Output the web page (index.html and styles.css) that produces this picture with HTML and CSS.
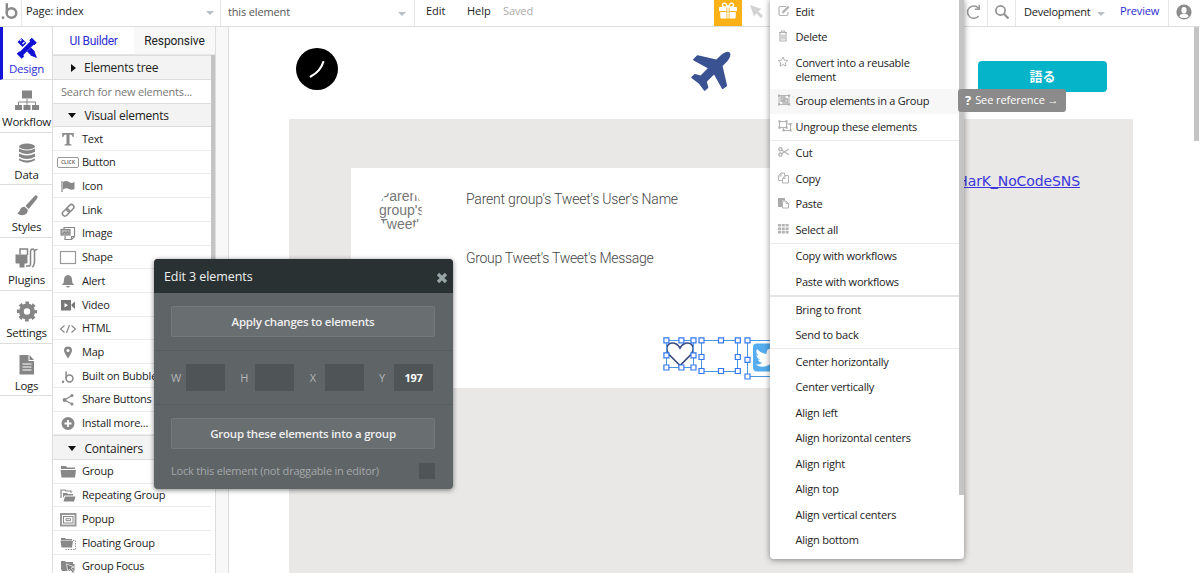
FILE: index.html
```html
<!DOCTYPE html>
<html lang="en">
<head>
<meta charset="utf-8">
<title>Editor</title>
<link rel="stylesheet" href="styles.css">
</head>
<body>
<div class="app">
  <header class="topbar">
    <div class="brand"><svg width="18" height="20" viewBox="0 0 18 20"><circle cx="11.500" cy="12" r="4.800" fill="none" stroke="#8a8a8a" stroke-width="2.400"/><path d="M6.800 2.200v9.800" stroke="#8a8a8a" stroke-width="2.400"/><circle cx="3" cy="16.700" r="1.400" fill="#8a8a8a"/></svg></div>
    <div class="picker page-picker"><span>Page: index</span><i class="caret"></i></div>
    <div class="picker element-picker"><span>this element</span><i class="caret"></i></div>
    <nav class="menus"><span class="m-edit">Edit</span><span class="m-help">Help</span><span class="m-saved">Saved</span></nav>
    <div class="gift"><svg width="20" height="18" viewBox="0 0 20 18" fill="#fff"><path d="M1 5h7.500v4H1zM11.500 5H19v4h-7.500zM2.300 10H8.500v6.500H3.500q-1.200 0-1.200-1.200zM11.500 10h6.200v5.300q0 1.200-1.200 1.200h-5zM9.300 5h1.400v11.500H9.300z"/><path d="M9.800 5C8.500 2 7 .9 5.800 1.200 4 1.700 4 4.600 6.300 5zM10.200 5C11.500 2 13 .9 14.200 1.200 16 1.700 16 4.600 13.700 5z" fill="none" stroke="#fff" stroke-width="1.400"/></svg></div>
    <div class="pointer"><svg width="14" height="14" viewBox="0 0 14 14"><path d="M0 0l11.500 4-3.300 2.200 4.800 4.800-2 2-4.800-4.800L4 11.500z" fill="#d2d2d2"/></svg></div>
    <div class="right-tools">
      <div class="redo"><svg width="16" height="16" viewBox="0 0 16 16"><path d="M12.300 3.900A6.200 6.200 0 1 0 12.600 12M13.200.8v4.400H8.800" fill="none" stroke="#999" stroke-width="1.500"/></svg></div>
      <div class="search-tool"><svg width="16" height="16" viewBox="0 0 16 16"><circle cx="6.500" cy="6.500" r="4.600" fill="none" stroke="#929292" stroke-width="1.700"/><path d="M9.800 9.800l4.700 4.700" stroke="#929292" stroke-width="2.200"/></svg></div>
      <div class="version"><span>Development</span><i class="caret"></i></div>
      <div class="preview">Preview</div>
      <div class="avatar"><svg width="16" height="16" viewBox="0 0 16 16"><circle cx="8" cy="8" r="7.600" fill="#8c8c8c"/><ellipse cx="8" cy="6.300" rx="2.600" ry="3.300" fill="#fff"/><path d="M3.200 12.500q.6-2 3.300-2.700h3q2.700.7 3.300 2.700-1.800 1.500-4.800 1.500t-4.800-1.500z" fill="#fff"/></svg></div>
    </div>
  </header>

  <div class="body">
    <aside class="rail">
      <div class="tab active"><svg width="24" height="24" viewBox="0 0 24 24"><path d="M4.500 4L18 17.500" stroke="#1010d4" stroke-width="5.500"/><path d="M17.500 5.500L6 17" stroke="#fff" stroke-width="6.500"/><path d="M18 6L6 18" stroke="#1010d4" stroke-width="4.600"/><path d="M3 16.500l5 5M15.500 3l5 5" stroke="#1010d4" stroke-width="3.600"/><path d="M19.500 15.500L22 22l-6.500-2.500z" fill="#1010d4"/><path d="M6.500 3.500l-1.500 1.500M9.500 6l-2 2" stroke="#fff" stroke-width="1.200"/></svg><span>Design</span></div>
      <div class="tab"><svg width="24" height="24" viewBox="0 0 24 24"><path d="M7 1.500h10v8H7zM0 16h7v5H0zM8.500 16h7v5h-7zM17 16h7v5h-7z" fill="#858585"/><path d="M12 10v6M3.500 16v-3h17v3" fill="none" stroke="#858585"/></svg><span>Workflow</span></div>
      <div class="tab"><svg width="24" height="24" viewBox="0 0 24 24" fill="#858585"><ellipse cx="12" cy="4.500" rx="8" ry="3"/><path d="M4 6.500q8 4 16 0v3.200q-8 4.500-16 0zM4 11.500q8 4 16 0v3.200q-8 4.500-16 0zM4 16.500q8 4 16 0v1.800q-8 4.800-16 0z"/></svg><span>Data</span></div>
      <div class="tab"><svg width="24" height="24" viewBox="0 0 24 24" fill="#858585"><path d="M21.500 1.500q2 .8.500 3.200l-8.300 10.300-3.300-3 9-9.800q1.100-1.200 2.100-.7zM9.500 12.700l3.400 3q-.3 5-5.400 5.500Q4.600 21.500 2 19q2 .2 2.900-2.700.8-3.400 4.600-3.600z"/></svg><span>Styles</span></div>
      <div class="tab"><svg width="24" height="24" viewBox="0 0 24 24"><path d="M.5 7.500h12v8q0 1-1 1H9.500v4h-5v-4h-3q-1 0-1-1z" fill="#858585"/><path d="M5 7.500V2h7.500v6M11 19h3q1.500 0 1.500-2V5q0-3 2-3t2 3v9q0 5-2.500 6M19.500 16V4.500q0-2 3-2" fill="none" stroke="#858585" stroke-width="1.500"/></svg><span>Plugins</span></div>
      <div class="tab"><svg width="24" height="24" viewBox="0 0 24 24"><circle cx="12" cy="11.500" r="5.600" fill="none" stroke="#858585" stroke-width="4.800"/><circle cx="12" cy="11.500" r="8.500" fill="none" stroke="#858585" stroke-width="3.200" stroke-dasharray="3.500 3.176" stroke-dashoffset="1.750"/></svg><span>Settings</span></div>
      <div class="tab"><svg width="24" height="24" viewBox="0 0 24 24"><path d="M4.500 2H13.500v6h5.500v13.500H4.500z" fill="#858585"/><path d="M14.500 2l4.500 5h-4.500z" fill="#858585"/><path d="M7.500 11h9M7.500 14h9M7.500 17h9" stroke="#fff"/></svg><span>Logs</span></div>
    </aside>

    <section class="palette">
      <div class="palette-tabs"><span class="on">UI Builder</span><span>Responsive</span></div>
      <div class="scroll">
        <div class="list">
          <div class="head"><i class="tri right"></i>Elements tree</div>
          <div class="find">Search for new elements...</div>
          <div class="head"><i class="tri"></i>Visual elements</div>
          <div class="row"><svg viewBox="0 0 18 16"><path d="M3.300 2h11.400v4h-1q-.4-2.500-2-2.500h-1.200V13l2 .5v1h-7v-1l2-.5V3.500H6.300Q4.700 3.500 4.300 6h-1z" fill="#888"/></svg>Text</div>
          <div class="row"><b class="click">CLICK</b>Button</div>
          <div class="row"><svg viewBox="0 0 18 16"><path d="M3 3v11" stroke="#888" stroke-width="1.200"/><path d="M4 4q3-2 6 0t5.500-.3V11q-2.800 1.500-5.500 0t-6 .5z" fill="#888"/></svg>Icon</div>
          <div class="row"><svg viewBox="0 0 18 16" fill="none" stroke="#888" stroke-width="1.500"><rect x="7.300" y="3.600" width="8" height="5" rx="2.500" transform="rotate(-45 11.300 6.100)"/><rect x="3" y="8" width="8" height="5" rx="2.500" transform="rotate(-45 7 10.500)"/></svg>Link</div>
          <div class="row"><svg viewBox="0 0 18 16" fill="none" stroke="#888" stroke-width="1.200"><path d="M5 5V2.500h10.500v9L12.500 14.500H6V11M15.500 11.500h-3v3"/><rect x="2" y="4.500" width="9" height="5.500" fill="#bbb"/><path d="M3.500 9l2-2L7 8.500 8.500 6.500l1.500 2.500"/></svg>Image</div>
          <div class="row"><svg viewBox="0 0 18 16"><rect x="1.500" y="2.500" width="15" height="12" fill="none" stroke="#999" stroke-width="1.200"/></svg>Shape</div>
          <div class="row"><svg viewBox="0 0 18 16"><path d="M9 2q4 .4 4 5 0 3.500 2 5H3q2-1.500 2-5 0-4.600 4-5zM7 13h4q-.5 1.500-2 1.500T7 13z" fill="#888"/></svg>Alert</div>
          <div class="row"><svg viewBox="0 0 18 16"><path d="M2 3h10v10.500H2zM12.500 7.500L16 4.500v7.500l-3.500-3z" fill="#777"/><path d="M5.500 6v4.500L9 8.200z" fill="#fff"/></svg>Video</div>
          <div class="row"><svg viewBox="0 0 18 16" fill="none" stroke="#888" stroke-width="1.200"><path d="M5.500 5.500l-4 3.500 4 3.500M12.500 5.500l4 3.500-4 3.500M10.500 5l-3 8"/></svg>HTML</div>
          <div class="row"><svg viewBox="0 0 18 16"><path d="M9 2.500q4 0 4 4 0 2-4 8Q5 8.500 5 6.500q0-4 4-4z" fill="#888"/><circle cx="9" cy="6.500" r="1.500" fill="#fff"/></svg>Map</div>
          <div class="row"><svg viewBox="0 0 18 16" fill="none" stroke="#888" stroke-width="1.500"><circle cx="10.500" cy="10.500" r="3.400"/><path d="M7.100 3.500v7"/><circle cx="4" cy="13.800" r=".5"/></svg>Built on Bubble</div>
          <div class="row"><svg viewBox="0 0 18 16"><path d="M13 4.500L5.500 9 13 13" fill="none" stroke="#888" stroke-width="1.300"/><g fill="#888"><circle cx="13" cy="4.500" r="1.500"/><circle cx="5.500" cy="9" r="1.900"/><circle cx="13" cy="13" r="1.500"/></g></svg>Share Buttons</div>
          <div class="row"><svg viewBox="0 0 18 16"><circle cx="9" cy="8.500" r="6.500" fill="#888"/><path d="M9 5v7M5.500 8.500h7" stroke="#fff" stroke-width="1.800"/></svg>Install more...</div>
          <div class="head"><i class="tri"></i>Containers</div>
          <div class="row"><svg viewBox="0 0 18 16"><path d="M2 3h5l1 1.500h8V6H2zM1.500 7H17l-1 7.500H2.500z" fill="#888"/></svg>Group</div>
          <div class="row"><svg viewBox="0 0 18 16"><path d="M2 11V3h4l1 1h5v2" fill="none" stroke="#888" stroke-width="1.200"/><path d="M4 6h4l1 1h5v1.500H5.500L4 11zM6 9.500h10.500L15 14.500H4.500z" fill="#888"/></svg>Repeating Group</div>
          <div class="row"><svg viewBox="0 0 18 16" fill="none" stroke="#888"><rect x="2" y="3" width="14.500" height="11.500" stroke="#999" stroke-width="2"/><rect x="4.500" y="5.500" width="9.500" height="6.500"/><path d="M7 7.700h4.500v2H7z"/></svg>Popup</div>
          <div class="row"><svg viewBox="0 0 18 16"><path d="M2 3h4l1 1h6v1.500H2zM1.500 6h12.500l-1 6.500h-10.500z" fill="#888"/><path d="M14 5.500h2.500v9H6" fill="none" stroke="#999" stroke-dasharray="1.500 1"/></svg>Floating Group</div>
          <div class="row"><svg viewBox="0 0 18 16"><path d="M2 3h4l1 1h7v2h1.500v7H3L2 11z" fill="#888"/><path d="M7.500 6l7.500 3-3 1 3.500 4-1.500 1.200-3.500-4-1.500 2.300z" fill="#777" stroke="#fff" stroke-width=".7"/></svg>Group Focus</div>
        </div>
        <div class="thumb"></div>
      </div>
    </section>

    <main class="canvas">
      <div class="page">
        <div class="page-head">
          <svg class="disc" width="42" height="42" viewBox="0 0 42 42"><circle cx="21" cy="21" r="21" fill="#000"/><path d="M27.300 14q-3 9.500-12.600 14.500" fill="none" stroke="#fff" stroke-width="2.200" stroke-linecap="round"/></svg>
          <svg class="plane" width="50" height="50" viewBox="0 0 1792 1792"><path fill="#3a5192" d="M1568 160q44 52 12 148t-108 172l-161 161 160 696q5 19-12 33l-128 96q-7 6-19 6-4 0-7-1-15-3-21-16l-279-508-259 259 53 194q5 17-8 31l-96 96q-9 9-23 9h-2q-15-2-24-13l-189-252-252-189q-11-7-13-23-1-13 9-25l96-97q9-9 23-9 6 0 8 1l194 53 259-259-508-279q-14-8-17-24-2-16 9-27l128-128q14-13 30-8l665 159 160-160q76-76 172-108t148 12z"/></svg>
          <div class="talk">語る</div>
        </div>
        <div class="feed">
          <article class="card">
            <div class="photo">Parent group's Tweet's</div>
            <div class="copy"><p>Parent group's Tweet's User's Name</p><p>Group Tweet's Tweet's Message</p></div>
          </article>
          <div class="handle">HarK_NoCodeSNS</div>
        </div>
      </div>
      <div class="canvas-thumb"></div>
      <svg class="selection" width="112" height="44" viewBox="0 0 112 44">
        <path d="M17 28.500L6 17.500C1.500 11.500 4.500 6 9.500 6q4.500 0 7.500 5 3-5 7.500-5C29.500 6 32.500 11.500 28 17.500z" fill="#fff" stroke="#3a4a80" stroke-width="1.700"/>
        <rect x="90" y="6.500" width="28" height="28" rx="4" fill="#55acee"/>
        <path transform="translate(92.500 9) scale(.95)" d="M24 4.600a10 10 0 0 1-2.800.8 5 5 0 0 0 2.200-2.700 10 10 0 0 1-3.100 1.200 4.900 4.900 0 0 0-8.400 4.500A14 14 0 0 1 1.700 3.100a4.900 4.900 0 0 0 1.500 6.600 4.900 4.900 0 0 1-2.200-.6v.1a4.900 4.900 0 0 0 4 4.800 4.900 4.900 0 0 1-2.300.1 4.900 4.900 0 0 0 4.600 3.400A9.900 9.900 0 0 1 0 19.500a14 14 0 0 0 21.500-12.400z" fill="#fff"/>
        <g fill="none" stroke="#4a98e0"><path d="M3.500 3.500h27v27h-27zM38.500 3.500h36v31h-36zM112 3.500H84.500v36H112"/></g>
        <g fill="#fff" stroke="#3478f0" stroke-width="1.200"><path d="M.9.900h5v5h-5zM15.900.9h5v5h-5zM28 .9h5v5h-5zM.9 15.900h5v5h-5zM28 15.900h5v5h-5zM.9 28h5v5h-5zM15.900 28h5v5h-5zM28 28h5v5h-5zM36 .9h5v5h-5zM55.500.9h5v5h-5zM72.300.9h5v5h-5zM36 17.500h5v5h-5zM72.300 17.500h5v5h-5zM36 31.500h5v5h-5zM55.500 31.500h5v5h-5zM72.300 31.500h5v5h-5zM82 .9h5v5h-5zM82 20.300h5v5h-5zM82 37h5v5h-5z"/></g>
      </svg>
    </main>
  </div>

  <section class="editor">
    <header><span>Edit 3 elements</span><svg width="12" height="12" viewBox="0 0 12 12"><path d="M2 2l8 8M10 2l-8 8" stroke="#9aa5a8" stroke-width="3.200"/></svg></header>
    <div class="sect"><div class="btn">Apply changes to elements</div></div>
    <div class="sect fields">
      <label>W<b></b></label><label>H<b></b></label><label>X<b></b></label><label>Y<b>197</b></label>
    </div>
    <div class="sect last"><div class="btn">Group these elements into a group</div>
      <div class="lock"><span>Lock this element (not draggable in editor)</span><b></b></div></div>
  </section>

  <div class="menu">
    <div class="items">
      <div class="mi"><svg viewBox="0 0 14 12" fill="none" stroke="#b3b3b3" stroke-width="1.200"><path d="M8 1.500H2.500Q1 1.500 1 3v6q0 1.500 1.500 1.500h6q1.500 0 1.500-1.500V7"/><path d="M4.500 7.800L10.800 1.500" stroke-width="2.400"/></svg>Edit</div>
      <div class="mi"><svg viewBox="0 0 14 12" fill="none" stroke="#b3b3b3"><path d="M1 2.500h8M3.500 2.500v-1.500h3v1.500M2 3v8h6V3M4 4.500v5M6 4.500v5" stroke-width="1.200"/></svg>Delete</div>
      <div class="mi tall"><svg viewBox="0 0 14 12"><path d="M5 1l1.400 3.100 3.400.4-2.500 2.300.7 3.400-3-1.700-3 1.700.7-3.400L.2 4.500l3.400-.4z" fill="none" stroke="#b3b3b3"/></svg><span>Convert into a reusable element</span></div>
      <div class="mi hover"><svg viewBox="0 0 14 12" fill="none" stroke="#b3b3b3"><path d="M1 1.500h10v9H1z"/><path d="M3 3h4v4H3zM5 5h4.500v4H5z" fill="#ddd" stroke-width="1.300"/><path d="M0 .600h2.200v2.200H0zM10 .6h2.200v2.200H10zM0 9.300h2.200v2.200H0zM10 9.300h2.200v2.200H10z" fill="#b3b3b3" stroke="none"/></svg>Group elements in a Group</div>
      <div class="mi line"><svg viewBox="0 0 14 12" fill="none" stroke="#b3b3b3"><path d="M1.500 1.500h7v6h-7zM8.500 4h4v6.500h-7v-3"/><path d="M.3.300h2.200v2.200H.3zM7.500.3h2.200v2.200H7.500zM.3 6.500h2.200v2.200H.3zM7.500 6.500h2.200v2.200H7.500zM11.500 3h2.200v2.200h-2.200zM11.500 9.300h2.200v2.200h-2.200zM4.500 9.300h2.200v2.200H4.500z" fill="#b3b3b3" stroke="none"/></svg>Ungroup these elements</div>
      <div class="mi"><svg viewBox="0 0 14 12" fill="none" stroke="#b3b3b3" stroke-width="1.300"><circle cx="2.400" cy="3.200" r="1.600"/><circle cx="2.400" cy="8.600" r="1.600"/><path d="M3.800 4L10.800 8.800M3.800 7.800l7-4.800"/></svg>Cut</div>
      <div class="mi"><svg viewBox="0 0 14 12" fill="none" stroke="#b3b3b3"><path d="M.5 4L3 1h3.500v2.500M4.500 8.500h-4V4H3V1M4.500 6.500L7 3.500h3.500v7.500h-6zM7 3.500v3H4.500"/></svg>Copy</div>
      <div class="mi"><svg viewBox="0 0 14 12"><path d="M0 1h7v2.500H4V10H0z" fill="#aaa"/><path d="M4.500 4H8l2.500 2.500V11h-6zM8 4v2.500h2.500" fill="none" stroke="#b3b3b3"/></svg>Paste</div>
      <div class="mi line"><svg viewBox="0 0 14 12"><path d="M0 1h3v2.600H0zM3.800 1h3v2.600h-3zM7.600 1h3v2.600h-3zM0 4.400h3V7H0zM3.800 4.400h3V7h-3zM7.600 4.400h3V7h-3zM0 7.800h3v2.600H0zM3.800 7.800h3v2.600h-3zM7.600 7.800h3v2.600h-3z" fill="#b3b3b3"/></svg>Select all</div>
      <div class="mi">Copy with workflows</div>
      <div class="mi thick">Paste with workflows</div>
      <div class="mi">Bring to front</div>
      <div class="mi line">Send to back</div>
      <div class="mi">Center horizontally</div>
      <div class="mi">Center vertically</div>
      <div class="mi">Align left</div>
      <div class="mi">Align horizontal centers</div>
      <div class="mi">Align right</div>
      <div class="mi">Align top</div>
      <div class="mi">Align vertical centers</div>
      <div class="mi">Align bottom</div>
    </div>
    <div class="menu-thumb"></div>
  </div>
  <div class="tip"><b>?</b><span>See reference →</span></div>
</div>
</body>
</html>
```
FILE: styles.css
```css
* { box-sizing: border-box; }
body { margin: 0; font: 11px/16px "Open Sans", "Noto Sans", sans-serif; letter-spacing: -.24px; color: #222; background: #fff; }
.app { position: relative; width: 1200px; height: 573px; overflow: hidden; display: flex; flex-direction: column; }
svg { display: block; flex: none; }

.topbar { height: 27px; flex: none; display: flex; border-bottom: 1px solid #ddd; padding-bottom: 2px; }
.topbar > div { height: 26px; }
.brand { width: 22px; border-right: 1px solid #e6e6e6; padding-top: 1px; }
.picker { display: flex; justify-content: space-between; align-items: center; border-right: 1px solid #e6e6e6; }
.page-picker { width: 199px; padding: 0 6px 4px 4px; letter-spacing: -.1px; }
.element-picker { width: 194px; padding: 0 8px 2px 7px; color: #555; letter-spacing: -.15px; }
.caret { border: 4px solid transparent; border-top: 4px solid #b9c0c5; border-bottom: 0; margin-top: 4px; }
.menus { width: 299px; display: flex; padding: 3px 0 0 11px; letter-spacing: 0; }
.m-edit { width: 41px; }
.m-help { width: 36px; }
.m-saved { color: #aaa; letter-spacing: -.1px; }
.gift { width: 28px; background: #fcb216; padding: 2px 4px; }
.pointer { padding: 5px 0 0 8px; width: 222px; }
.right-tools { display: flex; flex: 1; }
.right-tools > div { height: 26px; }
.redo { width: 24px; border-right: 1px solid #e6e6e6; padding: 4px 0 0 2px; }
.search-tool { width: 28px; border-right: 1px solid #e6e6e6; padding: 4px 0 0 6px; }
.version { width: 104px; display: flex; align-items: center; justify-content: space-between; padding: 0 15px 3px 8px; }
.preview { width: 49px; padding-top: 3px; color: #2c2cd4; border-right: 1px solid #e6e6e6; letter-spacing: -.15px; }
.avatar { padding: 4px 0 0 7px; }

.body { flex: 1; display: flex; min-height: 0; }
.rail { width: 53px; border-right: 1px solid #ddd; }
.tab { height: 52.750px; border-bottom: 1px solid #ddd; display: flex; flex-direction: column; align-items: center; padding: 9px 0 0 1px; font-size: 11.500px; gap: 1px; }
.tab.active { color: #2c2cd4; border-left: 3px solid #1414d8; padding-left: 0; padding-right: 2px; }

.palette { width: 163px; border-right: 1px solid #ddd; display: flex; flex-direction: column; overflow: hidden; }
.palette-tabs { height: 28px; flex: none; display: flex; border-bottom: 1px solid #e6e6e6; }
.palette-tabs span { width: 50%; background: #f8f8f8; text-align: center; line-height: 28px; font-family: Roboto, sans-serif; font-size: 12px; letter-spacing: -.1px; }
.palette-tabs .on { background: #fff; color: #2c2cd4; letter-spacing: -.3px; }
.scroll { display: flex; height: 518px; }
.list { flex: 1; }
.thumb { width: 4px; height: 400px; background: #c4c4c4; }
.head { height: 24.500px; border: solid #ddd; border-width: 1px 0; background: #f3f3f3; display: flex; align-items: center; padding: 2px 0 0 14px; font-size: 12px; }
.tri { border: 4px solid transparent; border-top: 5px solid #111; border-bottom: 0; margin: 0 8.500px 0 1px; }
.tri.right { border: 4px solid transparent; border-left: 5px solid #111; border-right: 0; margin: 0 8px 0 4px; }
.find { height: 23px; line-height: 24px; padding-left: 8px; color: #777; letter-spacing: -.18px; }
.row { height: 23.730px; border-bottom: 1px solid #ebebeb; display: flex; align-items: center; white-space: nowrap; padding: .4px 0 0 6px; }
.row svg { width: 18px; height: 16px; margin-right: 5px; }
.click { width: 22px; height: 11px; margin: 0 3px 0 -2px; border: 1px solid #999; border-radius: 2px; font-size: 5px; line-height: 9px; text-align: center; color: #777; letter-spacing: 0; }

.canvas { position: relative; flex: 1; background: linear-gradient(90deg, #f8f8f8 12px, #fff 12px); padding-left: 12px; display: flex; letter-spacing: 0; }
.page { width: 966px; background: #fff; border-left: 1px solid #ddd; display: flex; flex-direction: column; }
.page-head { height: 92px; display: flex; align-items: flex-start; padding: 21px 0 0 67px; }
.plane { margin: 0 0 0 348px; }
.talk { width: 129px; height: 31px; margin: 13px 0 0 242px; border-radius: 4px; background: #05b4c9; color: #fff; font: bold 13px/29px "Noto Sans CJK JP", sans-serif; text-align: center; }
.feed { flex: 1; width: 844px; margin-left: 60px; background: #e9e8e7; padding: 49px 0 0 62px; display: flex; }
.card { width: 600px; height: 220px; background: #fff; display: flex; padding: 21px 0 0 28px; }
.photo { width: 43px; height: 43px; border-radius: 50%; overflow: hidden; font: 14px/14px "Liberation Sans", sans-serif; color: #777; text-align: center; }
.copy { margin-left: 44px; font: 14px/20px Roboto, sans-serif; font-weight: 300; letter-spacing: -.2px; color: #444; }
.copy p { margin: 0 0 39px; }
.copy p + p { letter-spacing: -.3px; }
.handle { width: 129px; display: flex; justify-content: flex-end; margin-top: 3px; font: 14px/20px "DejaVu Sans", sans-serif; letter-spacing: -.1px; color: #3a36dc; text-decoration: underline; }
.canvas-thumb { width: 5px; height: 114px; margin-left: auto; background: #c4c4c4; margin-right: 1px; }
.selection { position: absolute; left: 447px; top: 310px; }

.editor { position: absolute; left: 154px; top: 259px; width: 299px; height: 230px; background: #5f6467; border-radius: 4px; box-shadow: 0 1px 5px rgba(0,0,0,.5); overflow: hidden; color: #f0f0f0; }
.editor header { height: 34px; background: #293133; display: flex; align-items: center; justify-content: space-between; padding: 1px 5px 0 10px; font-size: 12.500px; letter-spacing: -.08px; }
.editor header svg { margin-top: 2px; }
.sect { height: 58px; padding: 13px 18px 0 17px; border-bottom: 1px solid #585c5f; }
.btn { height: 31px; border: 1px solid #74797c; border-radius: 2px; background: #696e71; text-align: center; line-height: 30px; font-size: 11.500px; font-weight: 600; }
.fields { height: 54px; display: flex; justify-content: space-between; padding-right: 20px; }
.fields label { display: flex; align-items: center; justify-content: space-between; height: 27px; color: #b4b7b9; width: 54px; gap: 5px; }
.fields b { width: 39px; height: 27px; background: #4f5457; color: #fff; text-align: center; line-height: 27px; }
.last { border: 0; height: 84px; }
.lock { display: flex; justify-content: space-between; align-items: center; margin-top: 14px; color: #a4a8aa; letter-spacing: -.2px; }
.lock b { width: 16px; height: 16px; background: #4f5457; }

.menu { position: absolute; left: 770px; top: -1px; width: 194px; height: 560px; background: #fff; border-radius: 0 0 4px 4px; box-shadow: 0 1px 6px rgba(0,0,0,.45); display: flex; }
.items { flex: 1; }
.mi { height: 25.500px; display: flex; align-items: center; padding: .4px 0 0 25.500px; white-space: nowrap; }
.mi svg { width: 14px; height: 12px; margin: -2px 4px 0 -18px; }
.mi.tall { height: 38.500px; align-items: flex-start; padding-top: 6px; }
.mi.tall svg { margin-top: 0; }
.tall span { white-space: normal; width: 130px; line-height: 13.500px; }
.hover { background: #f7f7f7; }
.line { height: 26.500px; border-bottom: 1px solid #ebebeb; }
.thick { height: 28px; border-bottom: 2px solid #e4e4e4; }
.menu-thumb { width: 5px; height: 496px; background: #c4c4c4; }
.tip { position: absolute; left: 958px; top: 89px; width: 108px; height: 23px; background: #8b8b8b; color: #fff; border-radius: 3px; display: flex; align-items: center; padding: 0 0 1px 7px; gap: 4px; white-space: nowrap; letter-spacing: -.08px; }
.tip b { font-size: 13px; }
```
